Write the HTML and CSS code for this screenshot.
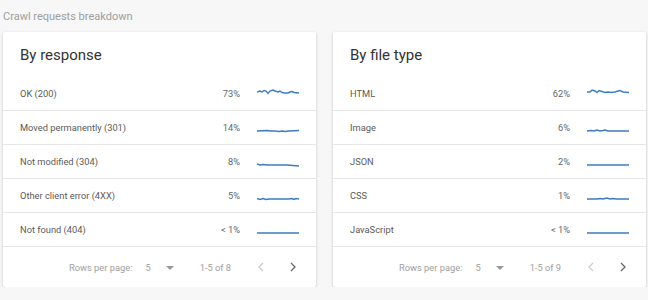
FILE: index.html
```html
<!DOCTYPE html>
<html>
    <head>
        <title>Crawl requests breakdown</title>
        <link rel="stylesheet" href="styles.css">
    </head>
    <body>
        <div class="page">
            <h2 class="section-title">Crawl requests breakdown</h2>
            <div class="cards">

                <div class="card">
                    <h3 class="card-title">By response</h3>
                    <div class="row">
                        <span class="label">OK (200)</span>
                        <span class="pct">73%</span>
                        <svg class="spark" viewBox="0 0 42 16"><path d="M0 6 L3 5 L5 6 L7 4.5 L9 5 L11 7.5 L13 5 L16 4 L18 5 L21 6 L23 5 L25 6.5 L28 7 L31 7 L33 6 L35 5.5 L37 6.5 L42 7"/></svg>
                    </div>
                    <div class="row">
                        <span class="label">Moved permanently (301)</span>
                        <span class="pct">14%</span>
                        <svg class="spark" viewBox="0 0 42 16"><path d="M0 11 L10 10.5 L14 11 L18 11 L22 11.5 L25 11 L28 11.5 L32 11 L42 10.5"/></svg>
                    </div>
                    <div class="row">
                        <span class="label">Not modified (304)</span>
                        <span class="pct">8%</span>
                        <svg class="spark" viewBox="0 0 42 16"><path d="M0 10 L3 11 L6 10.5 L10 11 L30 11 L36 11.5 L42 12"/></svg>
                    </div>
                    <div class="row">
                        <span class="label">Other client error (4XX)</span>
                        <span class="pct">5%</span>
                        <svg class="spark" viewBox="0 0 42 16"><path d="M0 10.5 L3 11.5 L6 10.5 L9 11.5 L12 11 L32 11 L35 10.5 L37 11.5 L39 10.5 L42 11"/></svg>
                    </div>
                    <div class="row">
                        <span class="label">Not found (404)</span>
                        <span class="pct">&lt; 1%</span>
                        <svg class="spark" viewBox="0 0 42 16"><path d="M0 11 L42 11"/></svg>
                    </div>
                    <div class="pager">
                        <span class="pager-label">Rows per page:</span>
                        <span class="pager-size">5</span>
                        <svg class="caret" viewBox="0 0 8 4"><path d="M0 0 L8 0 L4 4 Z"/></svg>
                        <span class="pager-range">1-5 of 8</span>
                        <svg class="chev off" viewBox="0 0 6 10"><path d="M5 1 L1 5 L5 9"/></svg>
                        <svg class="chev next" viewBox="0 0 6 10"><path d="M1 1 L5 5 L1 9"/></svg>
                    </div>
                </div>

                <div class="card">
                    <h3 class="card-title">By file type</h3>
                    <div class="row">
                        <span class="label">HTML</span>
                        <span class="pct">62%</span>
                        <svg class="spark" viewBox="0 0 42 16"><path d="M0 6 L3 6 L5 4 L8 5 L10 6.5 L12 4.5 L15 5.5 L18 6.5 L21 6 L24 6.5 L28 6 L31 5 L33 4.5 L36 6 L42 6.5"/></svg>
                    </div>
                    <div class="row">
                        <span class="label">Image</span>
                        <span class="pct">6%</span>
                        <svg class="spark" viewBox="0 0 42 16"><path d="M0 11 L4 10.5 L7 11 L10 10 L13 11 L16 10.5 L18 10 L21 11 L25 11 L42 11"/></svg>
                    </div>
                    <div class="row">
                        <span class="label">JSON</span>
                        <span class="pct">2%</span>
                        <svg class="spark" viewBox="0 0 42 16"><path d="M0 11 L42 11"/></svg>
                    </div>
                    <div class="row">
                        <span class="label">CSS</span>
                        <span class="pct">1%</span>
                        <svg class="spark" viewBox="0 0 42 16"><path d="M0 11 L10 11 L13 10.5 L16 11 L20 10 L23 11 L26 10.5 L29 11 L42 11"/></svg>
                    </div>
                    <div class="row">
                        <span class="label">JavaScript</span>
                        <span class="pct">&lt; 1%</span>
                        <svg class="spark" viewBox="0 0 42 16"><path d="M0 11 L42 11"/></svg>
                    </div>
                    <div class="pager">
                        <span class="pager-label">Rows per page:</span>
                        <span class="pager-size">5</span>
                        <svg class="caret" viewBox="0 0 8 4"><path d="M0 0 L8 0 L4 4 Z"/></svg>
                        <span class="pager-range">1-5 of 9</span>
                        <svg class="chev off" viewBox="0 0 6 10"><path d="M5 1 L1 5 L5 9"/></svg>
                        <svg class="chev next" viewBox="0 0 6 10"><path d="M1 1 L5 5 L1 9"/></svg>
                    </div>
                </div>

            </div>
        </div>
    </body>
</html>
```

FILE: styles.css
```css
body {
    margin: 0;
    background-color: #f7f7f7;
    font-family: Roboto, "Liberation Sans", sans-serif;
}

.page {
    padding: 10px 2px 0 3px;
}

.section-title {
    margin: 0;
    font-size: 11px;
    line-height: 14px;
    font-weight: 400;
    color: #9e9e9e;
}

.cards {
    display: grid;
    grid-template-columns: 313px 313px;
    gap: 17px;
    margin-top: 8px;
}

.card {
    background-color: #fff;
    border-radius: 2px;
    box-shadow: 0 1px 3px rgba(0, 0, 0, 0.22);
}

.card-title {
    margin: 0;
    height: 45px;
    padding-left: 17px;
    box-sizing: border-box;
    padding-top: 14px;
    font-size: 15px;
    line-height: 18px;
    font-weight: 400;
    color: #333;
}

.row {
    display: flex;
    align-items: center;
    height: 33px;
    padding: 0 17px;
    border-bottom: 1px solid #e6e6e6;
    font-size: 9.3px;
}

.label {
    flex: 1;
    color: #5a5a5a;
}

.pct {
    color: #666;
}

.spark {
    width: 42px;
    height: 16px;
    margin-left: 17px;
}

.spark path {
    fill: none;
    stroke: #3d7dbf;
    stroke-width: 1.4;
}

.pager {
    display: flex;
    align-items: center;
    height: 40px;
    padding-left: 66px;
    font-size: 9.3px;
    color: #9e9e9e;
}

.pager-size {
    margin-left: 13px;
}

.caret {
    width: 8px;
    height: 4px;
    margin-left: 15px;
    margin-top: 2px;
}

.caret path {
    fill: #999;
}

.pager-range {
    margin-left: 26px;
}

.chev {
    width: 6px;
    height: 10px;
    margin-left: 27px;
}

.chev.next {
    margin-left: 26px;
}

.chev path {
    fill: none;
    stroke: #666;
    stroke-width: 1.3;
}

.chev.off path {
    stroke: #ccc;
}
```
